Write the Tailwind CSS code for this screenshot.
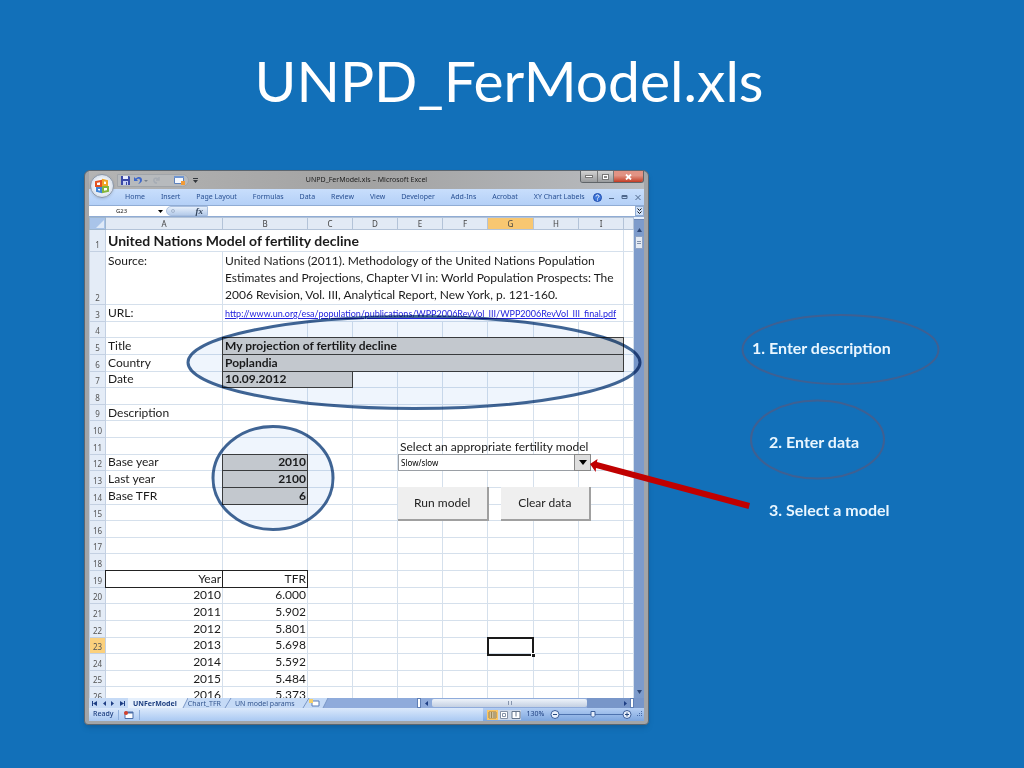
<!DOCTYPE html>
<html lang="en">
  <head>
    <meta charset="UTF-8" />
    <meta name="viewport" content="width=device-width, initial-scale=1.0" />
    <title>UNPD_FerModel.xls</title>
    <script src="https://cdn.jsdelivr.net/npm/@tailwindcss/browser@4"></script>
  </head>
  <body class="bg-[#1270b9] min-h-screen font-['Lato',sans-serif]">
    <div class="relative min-h-screen overflow-hidden">
      <h1 class="pt-[38px] pb-[48px] pr-[6px] text-center text-[57px] leading-[84px] text-white">UNPD_FerModel.xls</h1>

      <main class="flex items-start pl-[84px] pr-[60px]">
        <!-- Excel window -->
        <section class="w-[565px] shrink-0 rounded-t-md rounded-b-sm border border-[#5c6670] bg-[#a3a5a8] px-[4px] pb-[3px] shadow-md">
          <!-- Title bar -->
          <div class="relative flex h-[18px] items-center bg-linear-to-r from-[#b4b4b4] via-[#a2a2a2] to-[#b9bcc0]">
            <div class="ml-[28px] flex h-[13px] items-center gap-[4px] rounded-r-full border border-[#a0a4a9] bg-[#b7babd] px-[3px]">
              <svg class="size-[9px]" viewBox="0 0 9 9"><path d="M0 0h8l1 1v8H0z" fill="#3a48a8" /><path d="M2 0h5v3H2z" fill="#e8edff" /><path d="M2 5h5v4H2z" fill="#c6d0f4" /><path d="M5 6h1v3H5z" fill="#3a48a8" /></svg>
              <svg class="h-[9px] w-[14px]" viewBox="0 0 14 9"><path d="M0 1v4h4L2.600 3.600C4 2 6 2.500 6 4.500 6 6 5 7 4 8c2-.500 4-2 4-4C8 .500 4 0 1.600 2.500z" fill="#3f68c9" /><path d="M10 4h4l-2 2z" fill="#76808e" /></svg>
              <svg class="h-[9px] w-[10px]" viewBox="0 0 10 9"><path d="M7 1v3H4M7 4C5 1 1 2 2 5c.500 2 2 2 3 2" fill="none" stroke="#a6acb4" stroke-width="1.500" /></svg>
              <svg class="ml-2 h-[9px] w-[11px]" viewBox="0 0 11 9"><path d="M.5.5h9v7h-9z" fill="#f4f8ff" stroke="#5c80bb" /><path d="M0 0h10v2H0z" fill="#6f96d3" /><path d="M7 5h4v4H7z" fill="#f19b38" /></svg>
            </div>
            <svg class="ml-1 h-[5px] w-[5px]" viewBox="0 0 5 5"><path d="M0 0h5v1H0zM0 2h5L2.500 5z" fill="#33373c" /></svg>
            <span class="absolute inset-x-0 text-center text-[7px] text-[#1c1c1c] font-['Noto_Sans',sans-serif] pointer-events-none">UNPD_FerModel.xls – Microsoft Excel</span>
            <div class="ml-auto flex self-start overflow-hidden rounded-b-[3px] border border-t-0 border-[#5f6468]">
              <button class="flex h-[11px] w-[17px] items-center justify-center border-r border-[#777] bg-linear-to-b from-[#d2d2d2] to-[#9a9c9e]" aria-label="Minimize"><span class="h-[3px] w-[8px] border border-[#777] bg-white"></span></button>
              <button class="flex h-[11px] w-[16px] items-center justify-center border-r border-[#777] bg-linear-to-b from-[#d2d2d2] to-[#9a9c9e]" aria-label="Restore"><span class="h-[6px] w-[7px] border border-[#777] bg-white p-px"><span class="block size-full bg-[#888]"></span></span></button>
              <button class="flex h-[11px] w-[29px] items-center justify-center bg-linear-to-b from-[#e19384] from-40% to-[#c23a22]" aria-label="Close">
                <svg class="h-[6px] w-[7px]" viewBox="0 0 7 6"><path d="M1 .5l5 5M6 .5l-5 5" stroke="#fff" stroke-width="1.800" /></svg>
              </button>
            </div>
            <!-- Office button -->
            <button class="absolute left-px top-[3px] z-10 flex size-[24px] items-center justify-center rounded-full border border-[#8b97a8] bg-radial from-white from-30% to-[#bccade] shadow" aria-label="Office">
              <svg class="size-[16px]" viewBox="0 0 16 16" fill="none" stroke-width="2"><path d="M2 4l5-1v5H2z" stroke="#e2501e" /><path d="M9 2l4 1v4H9z" stroke="#f0a325" /><path d="M3 10h4v4l-4-1z" stroke="#3f83d6" /><path d="M9 9h5v4l-5 1z" stroke="#83b53c" /></svg>
            </button>
          </div>

          <!-- Ribbon tabs -->
          <nav class="flex h-[16px] items-center gap-[16px] whitespace-nowrap bg-linear-to-b from-[#c8defc] to-[#b4d0f7] pl-[36px] text-[7px] text-[#274f92] font-['Noto_Sans',sans-serif]">
            <a href="#">Home</a>
            <a href="#">Insert</a>
            <a href="#">Page Layout</a>
            <a href="#">Formulas</a>
            <a href="#">Data</a>
            <a href="#">Review</a>
            <a href="#">View</a>
            <a href="#">Developer</a>
            <a href="#">Add-Ins</a>
            <a href="#">Acrobat</a>
            <a href="#">XY Chart Labels</a>
            <div class="-ml-2 flex flex-1 items-center justify-end gap-[7px] pr-[3px]">
              <svg class="size-[9px]" viewBox="0 0 9 9"><circle cx="4.500" cy="4.500" r="4" fill="#3e77dc" stroke="#224fae" /><path d="M3 3.500c0-2 3-2 3 0 0 1-1.500 1-1.500 2M4.500 6.500v1" fill="none" stroke="#fff" /></svg>
              <svg class="h-[7px] w-[5px]" viewBox="0 0 5 7"><path d="M0 4h5v1H0z" fill="#50688c" /></svg>
              <svg class="h-[7px] w-[7px]" viewBox="0 0 7 7"><path d="M1 1.500h5v3H1z" fill="none" stroke="#50688c" /><path d="M1 1h5v2H1z" fill="#50688c" /></svg>
              <svg class="h-[7px] w-[6px]" viewBox="0 0 6 7"><path d="M.5 1l5 5M5.500 1l-5 5" stroke="#50688c" /></svg>
            </div>
          </nav>

          <!-- Formula bar -->
          <div class="flex h-[12px] items-stretch border-y border-[#90acd4] bg-white text-[6px] leading-none font-['Noto_Sans',sans-serif]">
            <input id="name-box" aria-label="Name box" value="G23" class="w-[65px] bg-white text-center text-[#222]" />
            <div class="flex w-[12px] items-center justify-center"><svg class="h-[3px] w-[5px]" viewBox="0 0 5 3"><path d="M0 0h5L2.500 3z" /></svg></div>
            <div class="flex w-[42px] items-center justify-between rounded-l-full border border-[#a9bfdf] bg-linear-to-b from-[#e6effb] to-[#b5cbea] pl-1 pr-1">
              <span class="size-[4px] rounded-full border border-[#a3b4cd]"></span>
              <span class="text-[9px] font-bold italic leading-none text-[#33445c] font-['Liberation_Serif',serif]">fx</span>
            </div>
            <input id="formula" aria-label="Formula" class="min-w-0 flex-1 bg-white" />
            <button class="flex w-[9px] items-center justify-center border border-[#90acd4] bg-[#cfe0f7]" aria-label="Expand formula bar"><svg class="h-[7px] w-[5px]" viewBox="0 0 5 7"><path d="M.5.5l2 2 2-2M.5 3.500l2 2 2-2" fill="none" stroke="#111" /></svg></button>
          </div>

          <!-- Worksheet -->
          <div class="flex h-[481px] bg-white">
            <div class="relative min-w-0 flex-1 overflow-hidden">
              <table class="h-[487px] w-full table-fixed border-collapse text-[12px] leading-none text-[#1b1b1b]">
                <colgroup>
                  <col class="w-[16px]" />
                  <col />
                  <col class="w-[85px]" />
                  <col class="w-[45px]" />
                  <col class="w-[45px]" />
                  <col class="w-[45px]" />
                  <col class="w-[45px]" />
                  <col class="w-[46px]" />
                  <col class="w-[45px]" />
                  <col class="w-[45px]" />
                  <col class="w-[10px]" />
                </colgroup>
                <thead>
                  <tr id="column-names" class="h-[12px]"></tr>
                </thead>
                <tbody id="sheet-rows"></tbody>
              </table>

              <!-- Form controls on the sheet -->
              <div class="absolute left-[309px] top-[220px] w-[193px]">
                <label for="model" class="block h-[17px] pl-[2px] text-[12px] leading-[19px] whitespace-nowrap text-[#1b1b1b]">Select an appropriate fertility model</label>
                <div class="relative">
                  <select id="model" class="block h-[17px] w-full appearance-none border border-[#9a9fa5] bg-white pl-[2px] text-[8px] text-black font-['Noto_Sans',sans-serif]">
                    <option>Slow/slow</option>
                  </select>
                  <span class="pointer-events-none absolute inset-y-0 right-0 flex w-[17px] items-center justify-center border border-[#888] bg-[#dedede]"><svg class="h-[5px] w-[8px]" viewBox="0 0 8 5"><path d="M0 0h8L4 5z" /></svg></span>
                </div>
                <div class="mt-[16px] flex gap-[12px] text-[12px] text-[#222]">
                  <button class="h-[34px] flex-1 border-r-2 border-b-2 border-[#a0a0a0] bg-[#efefef]">Run model</button>
                  <button class="h-[34px] flex-1 border-r-2 border-b-2 border-[#a0a0a0] bg-[#efefef]">Clear data</button>
                </div>
              </div>

              <!-- Selected cell -->
              <div class="absolute left-[398px] top-[420px] h-[19px] w-[47px] border-2 border-[#1a1a1a]"><span class="absolute -right-[3px] -bottom-[3px] size-[4px] border-t border-l border-white bg-[#1a1a1a]"></span></div>
            </div>

            <!-- Vertical scroll bar -->
            <div class="flex w-[10px] flex-col items-center bg-[#7d9bcb]">
              <span class="h-[3px] w-full border-b border-[#7089b5] bg-[#e6effb]"></span>
              <svg class="mt-2 h-[4px] w-[5px]" viewBox="0 0 5 4"><path d="M2.500 0L5 4H0z" fill="#2d4675" /></svg>
              <span class="mt-1 flex h-[13px] w-[8px] flex-col items-center justify-center gap-px border border-[#8fa3c4] bg-[#e4eaf3]"><i class="h-px w-[4px] bg-[#8090aa]"></i><i class="h-px w-[4px] bg-[#8090aa]"></i></span>
              <svg class="mt-auto mb-1 h-[4px] w-[5px]" viewBox="0 0 5 4"><path d="M0 0h5L2.500 4z" fill="#2d4675" /></svg>
            </div>
          </div>

          <!-- Sheet tabs -->
          <div class="flex h-[10px] items-stretch bg-[#8fabdb] text-[7px] leading-none font-['Noto_Sans',sans-serif]">
            <div class="flex w-[39px] items-center justify-around bg-[#c5daf6]">
              <svg class="h-[5px] w-[5px]" viewBox="0 0 5 5"><path d="M0 0h1v5H0zM5 0v5L1 2.500z" fill="#1f3f84" /></svg>
              <svg class="h-[5px] w-[3px]" viewBox="0 0 3 5"><path d="M3 0v5L0 2.500z" fill="#1f3f84" /></svg>
              <svg class="h-[5px] w-[3px]" viewBox="0 0 3 5"><path d="M0 0v5l3-2.500z" fill="#1f3f84" /></svg>
              <svg class="h-[5px] w-[5px]" viewBox="0 0 5 5"><path d="M4 0h1v5H4zM0 0v5l4-2.500z" fill="#1f3f84" /></svg>
            </div>
            <a href="#" class="flex items-center bg-[#e6f0fc] px-[5px] font-bold text-[#1e3f80]">UNFerModel</a>
            <svg class="h-[10px] w-[6px] bg-[#c5daf6]" viewBox="0 0 6 10"><path d="M0 0h6L1 10H0z" fill="#e6f0fc" /><path d="M6 0L1 10" stroke="#7a97c6" /></svg>
            <a href="#" class="flex items-center bg-[#c5daf6] text-[#34568f]">Chart_TFR</a>
            <svg class="h-[10px] w-[14px] bg-[#c5daf6]" viewBox="0 0 14 10"><path d="M10 0L4 10" stroke="#7a97c6" /></svg>
            <a href="#" class="flex items-center bg-[#c5daf6] text-[#34568f]">UN model params</a>
            <svg class="h-[10px] w-[34px]" viewBox="0 0 34 10"><path d="M0 0h33l-5 10H0z" fill="#c5daf6" /><path d="M14 0L8 10M33 0l-5 10" stroke="#7a97c6" /><path d="M17 3h7v5h-7z" fill="#fff" stroke="#5b7db6" /><path d="M14 1h4v4h-4z" fill="#f5d06a" /></svg>
            <div class="ml-auto flex w-[227px] items-stretch">
              <span class="w-[4px] border border-[#5f7fb5] bg-white"></span>
              <span class="flex w-[11px] items-center justify-center"><svg class="h-[5px] w-[3px]" viewBox="0 0 3 5"><path d="M3 0v5L0 2.500z" fill="#1f3f84" /></svg></span>
              <span class="my-px flex w-[155px] items-center justify-center rounded-[2px] bg-linear-to-b from-[#eef3fa] to-[#c4d0e2]"><i class="h-[4px] w-[4px] border-x border-[#8795ad]"></i></span>
              <span class="flex-1 bg-[#7896c9]"></span>
              <span class="flex w-[10px] items-center justify-center bg-[#7896c9]"><svg class="h-[5px] w-[3px]" viewBox="0 0 3 5"><path d="M0 0v5l3-2.500z" fill="#1f3f84" /></svg></span>
              <span class="w-[4px] border border-[#5f7fb5] bg-white"></span>
              <span class="w-[10px] bg-[#7896c9]"></span>
            </div>
          </div>

          <!-- Status bar -->
          <footer class="flex h-[13px] items-center bg-linear-to-b from-[#dbe9fb] to-[#a9c8f2] text-[7px] text-[#1e3f80] font-['Noto_Sans',sans-serif]">
            <span class="pl-[4px] font-medium">Ready</span>
            <span class="mx-[5px] h-[10px] w-px bg-[#8eaedb]"></span>
            <svg class="h-[8px] w-[10px]" viewBox="0 0 10 8"><path d="M1 1h8v6.500H1z" fill="#fff" stroke="#4c6ea8" /><path d="M1 1h8v1.500H1z" fill="#4c6ea8" /><circle cx="2" cy="2" r="2" fill="#d4402b" /></svg>
            <span class="mx-[5px] h-[10px] w-px bg-[#8eaedb]"></span>
            <div class="ml-auto flex h-full w-[161px] items-center bg-linear-to-b from-[#b4cef3] to-[#7ea6de] pl-[4px]">
              <svg class="h-[10px] w-[34px]" viewBox="0 0 34 10"><path d="M0 0h11v10H0z" fill="#fbc766" /><path d="M11 0h23v10H11z" fill="#cdd9ea" /><path d="M2 2h7v6H2z" fill="#fff3d0" /><path d="M2 2h7v6H2zM2 4h7M2 6h7M4.500 2v6M7 2v6" fill="none" stroke="#80683a" stroke-width=".7" /><path d="M13.500 1.500h7v7h-7z" fill="#fff" stroke="#8592a6" /><path d="M15.500 3.500h3v3h-3z" fill="none" stroke="#8592a6" /><path d="M25 1.500h8v7h-8zM29 1.500v5" fill="#fff" stroke="#66768c" /></svg>
              <span class="w-[29px] text-center">130%</span>
              <svg class="h-[11px] w-[82px]" viewBox="0 0 82 11"><path d="M8 5.500h66" stroke="#4e73af" /><g fill="#e8f0fc" stroke="#3d5f9a"><circle cx="5" cy="5.500" r="4" /><circle cx="77" cy="5.500" r="4" /><path d="M41 2.500h4v4l-2 2-2-2z" /></g><path d="M3 5.500h4M75 5.500h4M77 3.500v4" stroke="#26487f" /></svg>
              <svg class="ml-auto mr-px size-[7px]" viewBox="0 0 7 7" fill="#4a6ea9"><path d="M5 0h1v1H5zM3 2h1v1H3zM5 2h1v1H5zM1 4h1v1H1zM3 4h1v1H3zM5 4h1v1H5z" /></svg>
            </div>
          </footer>
        </section>

        <!-- Steps -->
        <aside class="ml-[103px] flex-1 whitespace-nowrap text-[16px] font-bold leading-[24px] text-[#e9f6ff]">
          <p class="pt-[166px]">1. Enter description</p>
          <p class="pl-[17px] pt-[70px]">2. Enter data</p>
          <p class="pl-[17px] pt-[44px]">3. Select a model</p>
        </aside>
      </main>

      <!-- Marks drawn over the sheet -->
      <svg class="pointer-events-none absolute left-0 top-0 h-[768px] w-[1024px] mix-blend-multiply" viewBox="0 0 1024 768">
        <g fill="#eff5fd" stroke="#3f6494" stroke-width="3">
          <ellipse cx="414" cy="362.500" rx="226" ry="46" />
          <ellipse cx="273" cy="478" rx="60" ry="51.500" />
        </g>
      </svg>
      <svg class="pointer-events-none absolute left-0 top-0 h-[768px] w-[1024px]" viewBox="0 0 1024 768">
        <g fill="none" stroke="#3f6092" stroke-width="2">
          <ellipse cx="840.500" cy="349.500" rx="98" ry="34.500" />
          <ellipse cx="817.500" cy="439.500" rx="66.500" ry="39" />
        </g>
        <path d="M590 464l7.500-5-.500 3 153 41-1.500 6L596 468l-.300 4z" fill="#c00000" />
      </svg>
    </div>

    <script>
      const columns = ["A", "B", "C", "D", "E", "F", "G", "H", "I", ""];
      const source =
        "United Nations (2011). Methodology of the United Nations Population<br>" +
        "Estimates and Projections, Chapter VI in: World Population Prospects: The<br>" +
        "2006 Revision, Vol. III, Analytical Report, New York, p. 121-160.";
      const url = "http://www.un.org/esa/population/publications/WPP2006RevVol_III/WPP2006RevVol_III_final.pdf";

      const line = "border border-[#d5e0ec] ";
      const text = line + "pl-[2px] whitespace-nowrap";
      const number = line + "pr-[1px] text-right";
      // double borders win over the solid gridlines where cells meet
      const input = "border border-double border-[#3d3d3d] bg-[#d0d0d0] pl-[2px] font-bold whitespace-nowrap";
      const inputNumber = "border border-double border-[#3d3d3d] bg-[#d0d0d0] pr-[1px] text-right font-bold";
      const head = "border border-double border-[#222] pr-[1px] text-right";

      // Each cell is [content, classes, colspan]
      const rows = {
        1: [["United Nations Model of fertility decline", line + "pl-[2px] text-[14px] font-bold", 9]],
        2: [["Source:", text + " align-top pt-[3px]"], [source, text + " align-top leading-[17px]", 8]],
        3: [["URL:", text], [`<a href="${url}" class="text-[9px] text-[#2222dd] underline">${url}</a>`, text, 8]],
        5: [["Title", text], ["My projection of fertility decline", input, 8]],
        6: [["Country", text], ["Poplandia", input, 8]],
        7: [["Date", text], ["10.09.2012", input, 2]],
        9: [["Description", text]],
        12: [["Base year", text], ["2010", inputNumber]],
        13: [["Last year", text], ["2100", inputNumber]],
        14: [["Base TFR", text], ["6", inputNumber]],
        19: [["Year", head], ["TFR", head]],
      };
      ["6.000", "5.902", "5.801", "5.698", "5.592", "5.484", "5.373"].forEach((tfr, i) => {
        rows[20 + i] = [[2010 + i, number], [tfr, number]];
      });

      document.getElementById("column-names").innerHTML =
        '<th class="border border-[#9eb6ce] bg-[#a9c4e9] p-0"><svg class="ml-auto h-[8px] w-[9px]" viewBox="0 0 9 8"><path d="M8 0v8H0z" fill="#dfeaf8" /></svg></th>' +
        columns
          .map((name) => {
            const fill = name === "G" ? "bg-[#f8c771]" : "bg-[#e2eaf5]";
            return `<th class="border border-[#b3c3d8] p-0 text-[8px] leading-none font-normal text-[#444] font-['Noto_Sans',sans-serif] ${fill}">${name}</th>`;
          })
          .join("");

      let html = "";
      for (let n = 1; n <= 26; n++) {
        const height = n === 1 ? "h-[22px]" : n === 2 ? "h-[53px]" : "";
        const fill = n === 23 ? "bg-[#fbd07c]" : "bg-[#e4ecf7]";
        html += `<tr class="${height}"><th class="border border-[#c3d0e2] p-0 text-[8px] font-normal text-[#555] align-bottom leading-[13px] font-['Noto_Sans',sans-serif] ${fill}">${n}</th>`;
        let used = 0;
        for (const [content, classes, span = 1] of rows[n] || []) {
          html += `<td class="p-0 ${classes}" colspan="${span}">${content}</td>`;
          used += span;
        }
        for (; used < 10; used++) html += `<td class="p-0 ${line}"></td>`;
        html += "</tr>";
      }
      document.getElementById("sheet-rows").innerHTML = html;
    </script>
  </body>
</html>
